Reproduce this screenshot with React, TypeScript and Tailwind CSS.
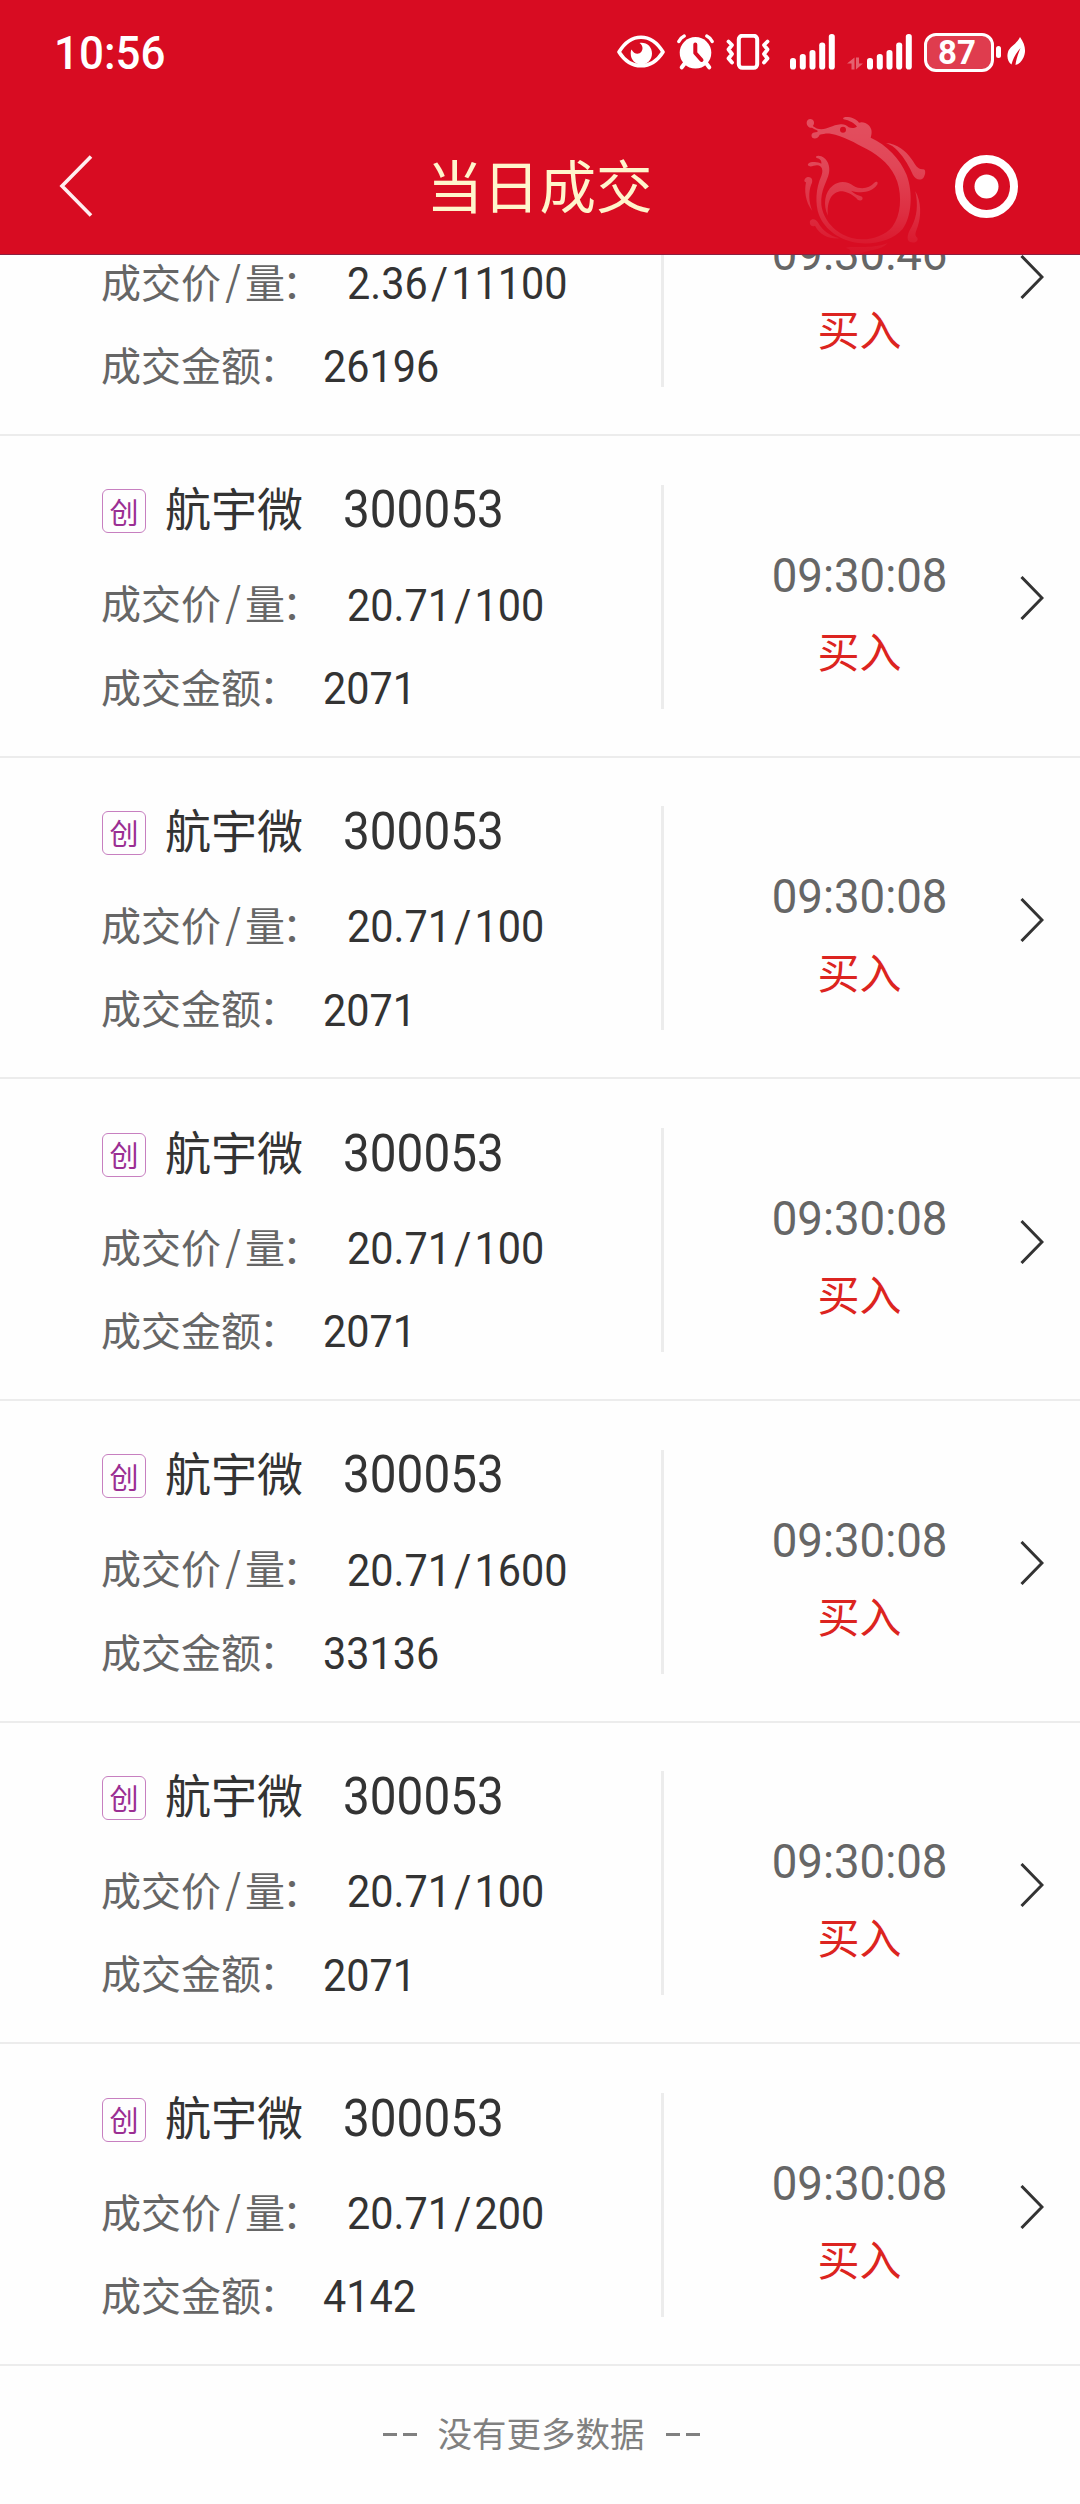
type Deal = {
  name?: string;
  code?: string;
  price: string;
  volume: string;
  amount: string;
  time: string;
};

const deals: Deal[] = [
  { price: "2.36", volume: "11100", amount: "26196", time: "09:30:46" },
  { name: "航宇微", code: "300053", price: "20.71", volume: "100", amount: "2071", time: "09:30:08" },
  { name: "航宇微", code: "300053", price: "20.71", volume: "100", amount: "2071", time: "09:30:08" },
  { name: "航宇微", code: "300053", price: "20.71", volume: "100", amount: "2071", time: "09:30:08" },
  { name: "航宇微", code: "300053", price: "20.71", volume: "1600", amount: "33136", time: "09:30:08" },
  { name: "航宇微", code: "300053", price: "20.71", volume: "100", amount: "2071", time: "09:30:08" },
  { name: "航宇微", code: "300053", price: "20.71", volume: "200", amount: "4142", time: "09:30:08" },
];

const EyeIcon = () => (
  <svg width="48" height="36" viewBox="0 0 48 36" fill="none">
    <path d="M2 18C8 8 16 3.2 24 3.2S40 8 46 18C40 27.5 32 31.8 24 31.8S8 27.5 2 18Z" stroke="#fff" strokeWidth="3.6" strokeLinejoin="round" />
    <path d="M22.5 9C30 8 35 13 35 19.5C35 26 30 30.5 24.5 30.5C18.5 30.5 13.7 26 13.7 19.5C13.7 18 14 16.5 14.5 15.5C17 20.5 22 21 24.5 17.5C26.5 14.5 25.5 11 22.5 9Z" fill="#fff" />
  </svg>
);

const AlarmIcon = () => (
  <svg width="37" height="36" viewBox="0 0 37 36" fill="none" stroke="#fff" strokeLinecap="round">
    <circle cx="18.5" cy="18.8" r="15.8" fill="#fff" stroke="none" />
    <path d="M1.8 7.5Q3.5 3.8 7.2 2M29.8 2Q33.5 3.8 35.2 7.5" strokeWidth="3.3" />
    <path d="M8 29L4.8 33.3M29 29L32.2 33.3" strokeWidth="4" />
    <path d="M18.3 10.5V19L24.5 26" stroke="#d80c22" strokeWidth="4" strokeLinejoin="round" />
  </svg>
);

const VibrateIcon = () => (
  <svg width="44" height="36" viewBox="0 0 44 36" fill="none" stroke="#fff">
    <rect x="12.8" y="1.8" width="18.4" height="32" rx="3.5" strokeWidth="4" />
    <path
      d="M2.5 7.5L6 11L2.5 15.5L6 20L2.5 24.5L6 28.5M41.5 7.5L38 11L41.5 15.5L38 20L41.5 24.5L38 28.5"
      strokeWidth="3.8"
      strokeLinecap="round"
      strokeLinejoin="round"
    />
  </svg>
);

const SignalIcon = () => (
  <svg width="45" height="36" viewBox="0 0 45 36" fill="#fff">
    <rect x="0" y="24" width="6" height="11.5" rx="2.8" />
    <rect x="9.8" y="20" width="6" height="15.5" rx="2.8" />
    <rect x="19.5" y="16" width="6" height="19.5" rx="2.8" />
    <rect x="29.2" y="8.5" width="6" height="27" rx="2.8" />
    <rect x="38.8" y="0" width="6" height="35.5" rx="2.8" />
  </svg>
);

const DataIcon = () => (
  <svg width="16" height="36" viewBox="0 0 16 36" fill="#fff" opacity=".35">
    <path d="M7.5 23.5V35.5H4.5V29.5H0ZM9 23.5H12V29.5H16L9 35.5Z" />
  </svg>
);

const LeafIcon = () => (
  <svg width="19" height="32" viewBox="0 0 19 32" fill="#fff">
    <path d="M13 1C18 8 19.5 15 16.5 21.5C14.5 26 11.5 28.5 8.5 29C9 24 11 18 13.5 12C9 17 6 22.5 4.5 28.5C1 26 -.5 21 1 16C2.7 10.5 9 9 13 1Z" />
  </svg>
);

const Dragon = () => (
  <svg className="absolute left-[800px] top-[113px]" width="130" height="142" viewBox="60 39 390 426" fill="none">
    <defs>
      <linearGradient id="fade" gradientUnits="userSpaceOnUse" x1="0" y1="50" x2="0" y2="465">
        <stop offset="0" stopColor="#fff" stopOpacity=".28" />
        <stop offset=".35" stopColor="#fff" stopOpacity=".24" />
        <stop offset=".7" stopColor="#fff" stopOpacity=".14" />
        <stop offset="1" stopColor="#fff" stopOpacity=".02" />
      </linearGradient>
    </defs>
    <g fill="url(#fade)">
      {/* head and body */}
      <path
        fillRule="evenodd"
        d="M80 68C80 58 90 54 98 59C104 64 103 74 98 78C106 84 114 88 124 88C144 88 156 75 182 73C192 72 199 76 206 82C216 86 224 84 231 80C224 70 208 61 191 58C187 54 191 51 199 51C214 51 229 57 237 68C246 64 258 68 266 76C276 86 277 98 272 113C320 135 360 175 380 225C400 280 395 350 368 387C340 420 285 435 235 429C180 422 135 390 117 345C105 312 107 265 124 228C131 211 126 197 112 196C102 195 91 204 84 196C82 190 90 186 100 186C110 185 118 188 124 191C126 180 118 176 109 173C105 168 114 165 124 169C143 177 151 199 147 219C141 248 121 268 124 315C130 360 165 400 215 414C260 425 310 412 337 380C363 345 366 290 352 245C337 200 300 168 260 147C225 129 190 107 152 101C140 99 130 102 119 104C116 113 105 119 97 113C91 105 97 96 108 97C112 96 114 94 113 92C106 88 101 86 96 83C87 84 80 77 80 68ZM189 80A9 9 0 1 0 189 98A9 9 0 1 0 189 80Z"
      />
      <path d="M318 129C352 132 376 151 395 178C407 195 412 208 427 208C438 205 438 222 430 234C419 244 405 236 399 225C389 202 374 174 353 152C343 141 332 134 318 129Z" />
      <path d="M144 347C128 315 134 275 158 257C179 239 205 245 220 257C244 271 269 264 283 248C290 241 297 247 290 256C275 278 242 281 213 272C223 282 237 287 246 290C252 299 241 305 233 299C222 287 206 277 188 274C158 272 139 301 144 347Z" />
      <path d="M97 333C75 305 73 271 78 247C70 246 72 235 83 231C98 230 99 244 94 253C85 276 86 305 97 333Z" />
      <path d="M179 415C145 417 119 404 105 377C94 382 88 374 90 363C97 353 109 358 115 369C128 392 148 407 179 415Z" />
      <path d="M406 274C424 305 424 350 413 380C407 397 402 405 412 413C416 424 405 430 390 426C377 418 384 398 395 380C411 350 415 315 406 274Z" />
      <path d="M198 443C230 437 275 448 323 430C300 454 260 448 235 464H205C217 453 211 448 198 443Z" />
    </g>
  </svg>
);

const StatusBar = () => (
  <div className="flex h-[104px] items-center justify-between pl-[54px] pr-[54px]">
    <span className="origin-left scale-x-[.935] font-[Roboto] text-[47px] font-medium leading-none text-white">10:56</span>
    <div className="flex items-center">
      <EyeIcon />
      <div className="ml-3"><AlarmIcon /></div>
      <div className="ml-3"><VibrateIcon /></div>
      <div className="ml-5"><SignalIcon /></div>
      <div className="ml-3"><DataIcon /></div>
      <div className="ml-1"><SignalIcon /></div>
      <div className="ml-3 flex h-[39px] w-[70px] items-center justify-center rounded-[12px] border-3 border-white bg-white/20 pr-1 font-[Roboto] text-[33px] font-bold leading-none text-white">
        87
      </div>
      <div className="ml-0.5 h-3 w-[5px] rounded-sm bg-white" />
      <div className="ml-[6px]"><LeafIcon /></div>
    </div>
  </div>
);

const Header = () => (
  <header className="relative z-10 h-[255px] border-b border-[#8b2040] bg-[#d80c22]">
    <StatusBar />
    <Dragon />
    <div className="grid h-[164px] grid-cols-3 items-center pl-[59px] pr-[62px]">
      <svg width="34" height="62" viewBox="0 0 34 62" fill="none">
        <path d="M32 1.5L3 31L32 60.5" stroke="#ffeef0" strokeWidth="3.6" />
      </svg>
      <h1 className="pb-[5px] pl-0.5 text-center text-[56.5px] leading-none whitespace-nowrap text-[#fff5cc]">当日成交</h1>
      <svg className="justify-self-end" width="63" height="63" viewBox="0 0 63 63" fill="none">
        <circle cx="31.5" cy="31.5" r="27.5" stroke="#fff" strokeWidth="8" />
        <circle cx="31.5" cy="31.5" r="12" fill="#fff" />
      </svg>
    </div>
  </header>
);

const DealRow = ({ deal }: { deal: Deal }) => (
  <li className="flex h-[321.67px] items-center border-b-2 border-[#ececec] pt-0.5">
    <div className="flex h-[224px] w-[664px] flex-col border-r-3 border-[#ececec] pl-[101px]">
      <div className="flex h-[50px] shrink-0 items-center">
        {deal.name && (
          <>
            <span className="ml-px mt-[3px] flex size-[44px] items-center justify-center rounded-md border border-[#c77fc0] text-[29px] leading-none text-[#9b2f93]">创</span>
            <span className="ml-[19px] w-[178px] pb-[7px] text-[46px] leading-none text-[#333]">{deal.name}</span>
            <span className="origin-left scale-x-[.935] font-[Roboto] text-[51px] leading-none text-[#333]">{deal.code}</span>
          </>
        )}
      </div>
      <div className="mt-[45px] flex h-[48px] shrink-0 items-center">
        <span className="flex w-[246px] pb-[3px] text-[40px] leading-none text-[#666]">
          成交价<span className="-mt-0.5 w-6 text-center">/</span>量<span className="-ml-[3px]">：</span>
        </span>
        <span className="flex origin-left scale-x-[.93] pt-1 font-[Roboto] text-[44.5px] leading-none text-[#333]">
          {deal.price}<span className="mx-[3.5px]">/</span>{deal.volume}
        </span>
      </div>
      <div className="mt-[33px] flex h-[51px] shrink-0 items-center">
        <span className="w-[222px] pb-px text-[40px] leading-none text-[#666]">
          成交金额<span className="-ml-0.5">：</span>
        </span>
        <span className="origin-left scale-x-[.93] pt-[6px] font-[Roboto] text-[44.5px] leading-none text-[#333]">{deal.amount}</span>
      </div>
    </div>
    <div className="ml-[35px] flex w-[321px] flex-col items-center pt-[29px]">
      <span className="scale-x-95 font-[Roboto] text-[48px] leading-none text-[#666]">{deal.time}</span>
      <span className="mt-[29px] text-[42px] leading-none text-[#dc2420]">买入</span>
    </div>
    <svg className="mt-[3px]" width="24" height="44" viewBox="0 0 24 44" fill="none">
      <path d="M1.5 1L22 22L1.5 43" stroke="#333" strokeWidth="3" />
    </svg>
  </li>
);

const Dashes = () => (
  <span className="flex gap-[6px]">
    <i className="h-[3px] w-[14px] bg-[#808080]" />
    <i className="h-[3px] w-[14px] bg-[#808080]" />
  </span>
);

export default function App() {
  return (
    <div className="h-[2504px] w-[1080px] overflow-hidden bg-[#fefefe] font-['Noto_Sans_CJK_SC',sans-serif]">
      <Header />
      {/* list is scrolled, first row sits partly under the header */}
      <ul className="-mt-[140.7px]">
        {deals.map((deal, i) => (
          <DealRow key={i} deal={deal} />
        ))}
      </ul>
      <div className="flex h-[138px] items-center justify-center gap-[21px] pl-0.5 text-[34.5px] leading-none text-[#808080]">
        <Dashes />
        <span className="pb-[5px]">没有更多数据</span>
        <Dashes />
      </div>
    </div>
  );
}
